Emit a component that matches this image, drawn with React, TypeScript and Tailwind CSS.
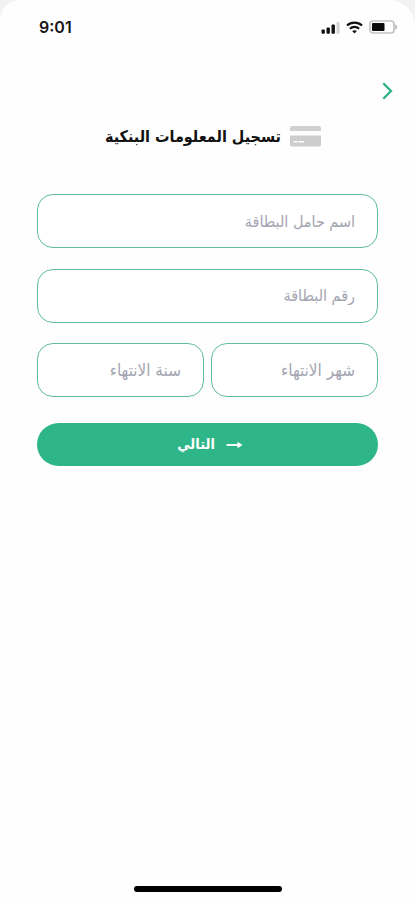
import React, { useState } from "react";
import clsx from "clsx";

interface FieldProps {
  name: string;
  placeholder: string;
  value: string;
  onChange: (e: React.ChangeEvent<HTMLInputElement>) => void;
  className?: string;
}

const Field = ({ name, placeholder, value, onChange, className = "text-[16px]" }: FieldProps) => {
  return (
    <input
      type="text"
      name={name}
      placeholder={placeholder}
      value={value}
      onChange={onChange}
      className={clsx(
        "block h-[54px] w-full min-w-0 rounded-[16px] border border-[#5fbd9b] bg-white pl-4 pr-[22px] text-[#333] outline-none placeholder:text-[#a3a5b1]",
        className
      )}
    />
  );
};

const StatusBar = () => {
  return (
    <div dir="ltr" className="flex h-[54px] items-center justify-between pl-[39px] pr-[17px]">
      <span className="font-['Inter','Liberation_Sans',sans-serif] text-[16px] font-semibold text-[#161616]">
        9:01
      </span>
      <div className="flex items-center gap-[6px]">
        {/* Signal */}
        <svg width="19" height="13" viewBox="0 0 19 13">
          <rect x="0.5" y="8.5" width="3.4" height="4.2" rx="1" fill="#111" />
          <rect x="5.5" y="6.5" width="3.4" height="6.2" rx="1" fill="#111" />
          <rect x="10.5" y="3.5" width="3.4" height="9.2" rx="1" fill="#111" />
          <rect x="15.5" y="1" width="3.2" height="11.7" rx="1" fill="#d4d4d4" />
        </svg>
        {/* Wifi */}
        <svg width="17" height="13" viewBox="0 0 17 13" fill="none" stroke="#111" strokeWidth="2.1">
          <path d="M1 4.6C5.1 0.6 11.9 0.6 16 4.6" />
          <path d="M3.9 7.7C6.5 5.2 10.5 5.2 13.1 7.7" />
          <path d="M6.2 10.1C7.5 8.9 9.5 8.9 10.8 10.1L8.5 12.4Z" fill="#111" stroke="none" />
        </svg>
        {/* Battery */}
        <svg width="29" height="14" viewBox="0 0 29 14">
          <rect x="1" y="1" width="24" height="12" rx="3" fill="#fff" stroke="#c4c4c4" strokeWidth="1.7" />
          <rect x="3" y="3" width="12.5" height="8" rx="1" fill="#0b0b0b" />
          <path d="M26.2 4.4C28.8 5.4 28.8 8.6 26.2 9.6Z" fill="#b5b5b5" />
        </svg>
      </div>
    </div>
  );
};

const App = () => {
  const [formData, setFormData] = useState({
    holder: "",
    number: "",
    month: "",
    year: "",
  });

  const handleChange = (e: React.ChangeEvent<HTMLInputElement>) => {
    const { name, value } = e.target;
    setFormData({ ...formData, [name]: value });
  };

  return (
    <div className="bg-[#f2f2f2]">
      <div
        dir="rtl"
        className="flex h-[900px] w-full flex-col rounded-tl-[20px] rounded-tr-[26px] bg-[#fefefe] font-['DejaVu_Sans_Condensed','DejaVu_Sans','Noto_Sans',sans-serif]"
      >
        <StatusBar />

        <div className="flex h-[74px] items-center pr-[21px]">
          <button type="button" aria-label="رجوع" className="block">
            <svg width="13" height="18" viewBox="0 0 13 18" fill="none" stroke="#2cb384" strokeWidth="2.3">
              <path d="M2.3 1.3L10 9L2.3 16.7" />
            </svg>
          </button>
        </div>

        <div className="flex h-[18px] items-center justify-center gap-[9px] pl-[11px]">
          <svg width="31" height="22" viewBox="0 0 31 22">
            <path d="M2 0H29Q31 0 31 2V5H0V2Q0 0 2 0Z" fill="#d0d0d0" />
            <path d="M0 9.5H31V18.5Q31 20.5 29 20.5H2Q0 20.5 0 18.5Z" fill="#cdcdcd" />
            <path d="M3.5 15.7H7.5M8.5 15.7H14" stroke="#fff" strokeWidth="1.5" />
          </svg>
          <h1 className="whitespace-nowrap text-[16px] font-bold leading-[18px] text-[#111]">
            تسجيل المعلومات البنكية
          </h1>
        </div>

        <form onSubmit={(e) => e.preventDefault()} className="mt-12 flex flex-col px-[37px]">
          <div className="flex flex-col gap-[20.5px]">
            <Field name="holder" placeholder="اسم حامل البطاقة" value={formData.holder} onChange={handleChange} />
            <Field name="number" placeholder="رقم البطاقة" value={formData.number} onChange={handleChange} />
            <div className="grid grid-cols-2 gap-[7px]">
              <Field
                name="month"
                placeholder="شهر الانتهاء"
                value={formData.month}
                onChange={handleChange}
                className="text-[17px]"
              />
              <Field
                name="year"
                placeholder="سنة الانتهاء"
                value={formData.year}
                onChange={handleChange}
                className="text-[17px]"
              />
            </div>
          </div>

          <button
            type="submit"
            className="mt-[26px] flex h-[43px] items-center justify-center gap-[11px] rounded-full bg-[#2fb688] pl-[5px] text-[14.5px] font-bold text-white"
          >
            <svg width="17" height="8" viewBox="0 0 17 8">
              <path d="M0.5 4H13" stroke="#fff" strokeWidth="1.9" />
              <path d="M11.5 0.8L16.5 4L11.5 7.2Z" fill="#fff" />
            </svg>
            <span>التالي</span>
          </button>
        </form>

        <div className="mx-auto mb-2 mt-auto h-[6px] w-[148px] rounded-full bg-black" />
      </div>
    </div>
  );
};

export default App;
